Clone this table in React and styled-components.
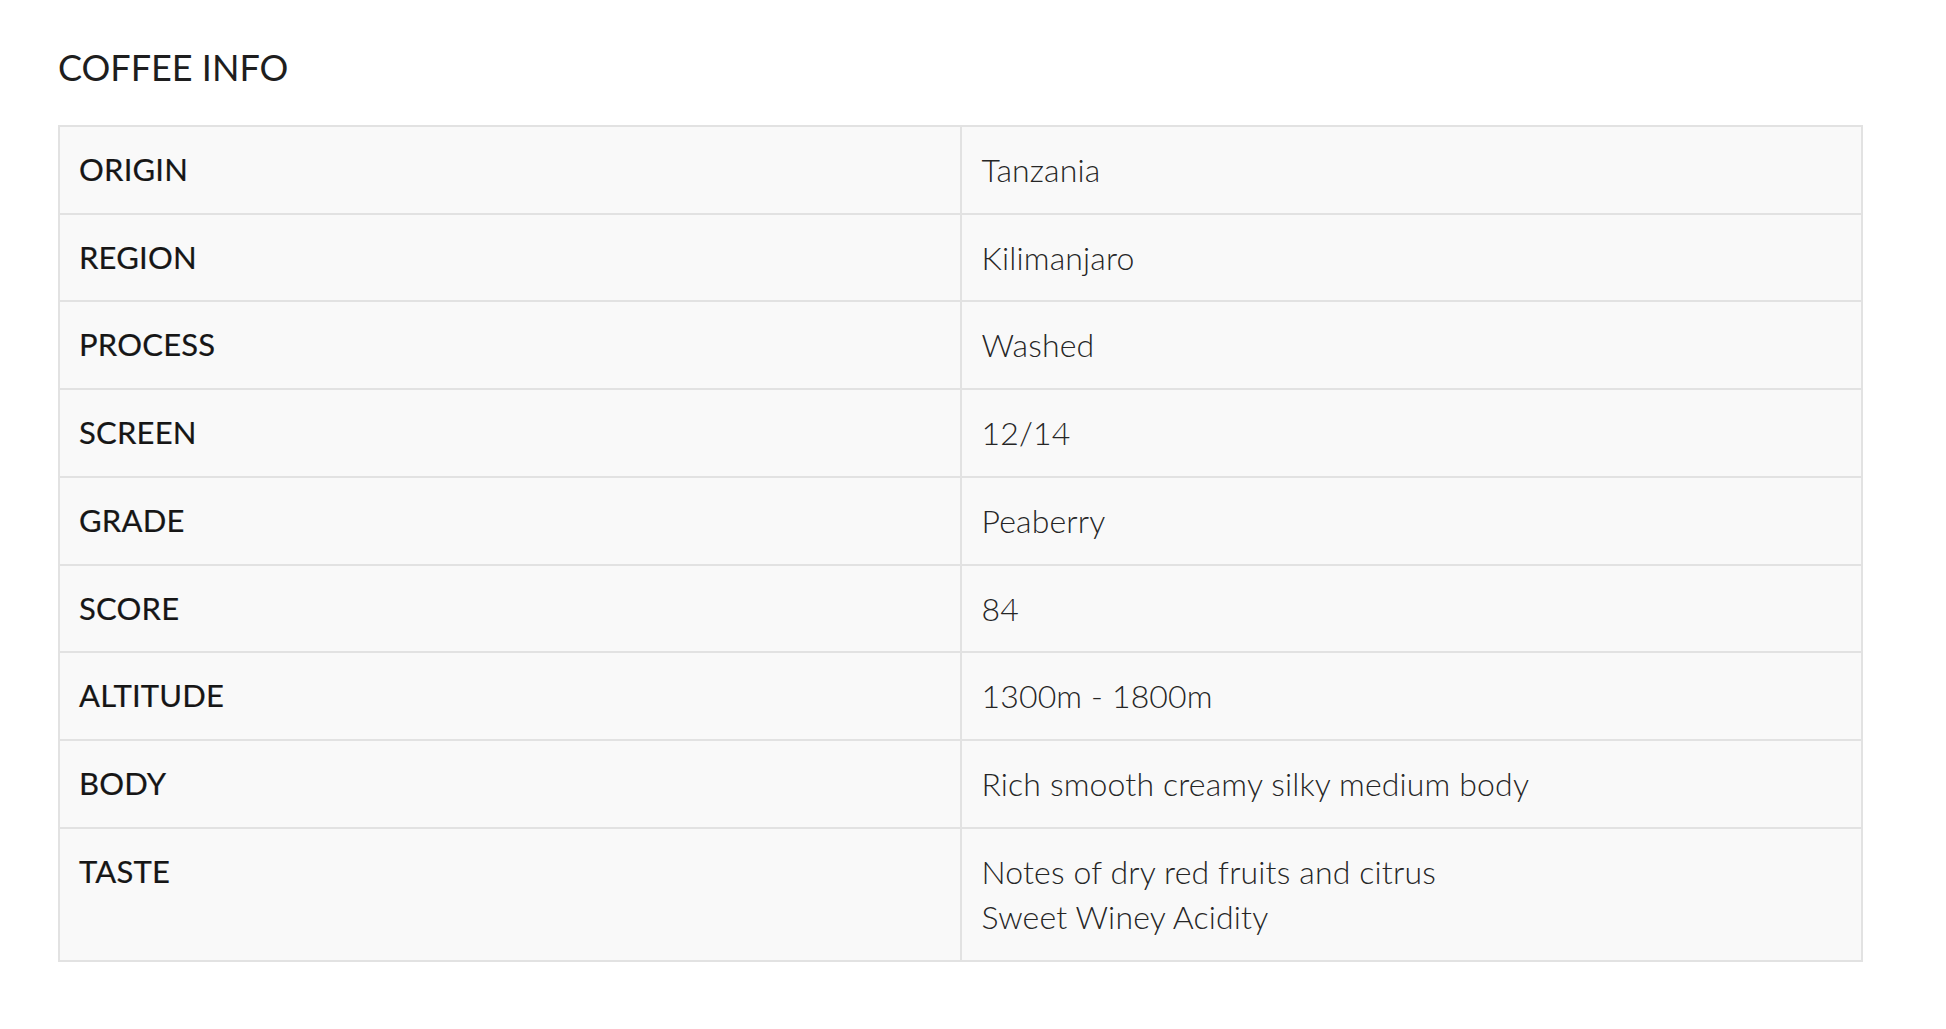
import React from 'react';
import styled, { createGlobalStyle } from 'styled-components';

const GlobalStyle = createGlobalStyle`
  body {
    margin: 0;
    background: #fff;
    font-family: Lato, "Noto Sans", sans-serif;
    color: #222;
  }
`;

const Section = styled.section`
  padding: 41px 83px 40px 58px;
`;

const Heading = styled.h3`
  margin: 0 0 32px;
  font-size: 36px;
  line-height: 52px;
  font-weight: 400;
  color: #1e1e1e;
`;

const Table = styled.table`
  width: 100%;
  border-collapse: collapse;
  table-layout: fixed;
  background: #f9f9f9;
  border: 2px solid #e2e2e2;
`;

const Cell = styled.td`
  vertical-align: top;
  padding: 20px 19px 20px ${(p) => (p.$label ? '19px' : '20px')};
  border: 2px solid #e2e2e2;
  font-size: ${(p) => (p.$label ? '31px' : '32px')};
  line-height: 45.7px;
  letter-spacing: ${(p) => (p.$label ? '0.2px' : '0.15px')};
  font-weight: ${(p) => (p.$label ? 400 : 300)};
  color: ${(p) => (p.$label ? '#161616' : '#262626')};
  -webkit-text-stroke: ${(p) => (p.$label ? '0.2px #161616' : '0')};
`;

const rows = [
  ['ORIGIN', ['Tanzania']],
  ['REGION', ['Kilimanjaro']],
  ['PROCESS', ['Washed']],
  ['SCREEN', ['12/14']],
  ['GRADE', ['Peaberry']],
  ['SCORE', ['84']],
  ['ALTITUDE', ['1300m - 1800m']],
  ['BODY', ['Rich smooth creamy silky medium body']],
  ['TASTE', ['Notes of dry red fruits and citrus', 'Sweet Winey Acidity']],
];

const App = () => (
  <>
    <GlobalStyle />
    <Section>
      <Heading>COFFEE INFO</Heading>
      <Table>
        <tbody>
          {rows.map(([label, lines]) => (
            <tr key={label}>
              <Cell $label>{label}</Cell>
              <Cell>
                {lines.map((line, i) => (
                  <React.Fragment key={line}>
                    {i > 0 && <br />}
                    {line}
                  </React.Fragment>
                ))}
              </Cell>
            </tr>
          ))}
        </tbody>
      </Table>
    </Section>
  </>
);

export default App;
